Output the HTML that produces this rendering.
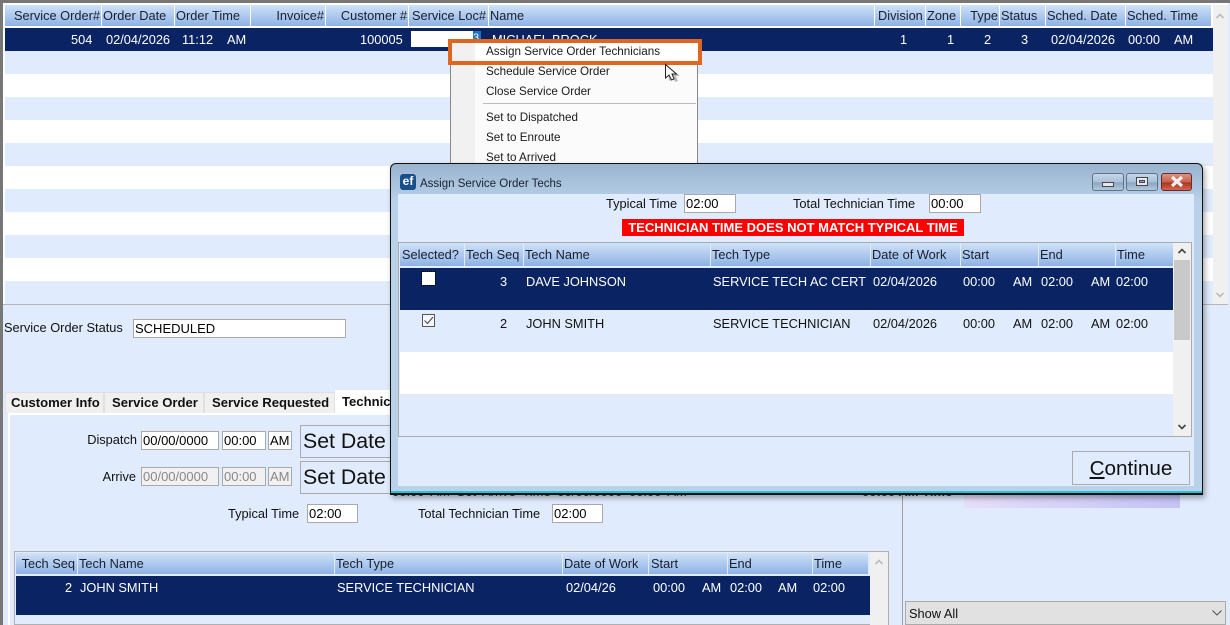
<!DOCTYPE html>
<html><head><meta charset="utf-8">
<style>
html,body{margin:0;padding:0;width:1230px;height:625px;overflow:hidden;background:#e0ecfd}
#p{position:relative;width:1230px;height:625px;overflow:hidden;background:#e0ecfd;font:12.8px "Liberation Sans",sans-serif;color:#111}
#p div{position:absolute;box-sizing:border-box;white-space:nowrap}
.h{background:linear-gradient(#cfe2f8,#8eb2e6);line-height:21px;padding:0 1px;color:#1a1f2e}
.d{line-height:23px;height:23px}
.r{text-align:right}
.w{color:#fff}
.t{line-height:16px;height:16px}
.i{background:#fff;border:1px solid #a9a9a9;line-height:17px;padding-left:1px;color:#000;font-size:13px}
.g{color:#888;background:#f1f1f1}
.s{background:#e0ecfd;border:1px solid #aaa;font-size:21.3px;line-height:31px;padding-left:2px;color:#111}
.m{line-height:16px;font-size:11.66px;left:486px;color:#1a1a1a}
.wb{top:173px;height:18px;border:1px solid #5d7388;border-radius:3px;background:linear-gradient(#c5d6e8 0,#a8c0d8 50%,#8aa6c2 55%,#b3c8dc 100%)}
.tab{top:392px;height:22px;background:#f0f0f0;border:1px solid #e0e0e0;font-weight:bold;font-size:13.1px;line-height:20px}
</style></head><body><div id="p">

<div style="left:0;top:0;width:1230px;height:3px;background:#777"></div>
<div style="left:0;top:0;width:3px;height:625px;background:#777"></div>
<div style="left:3px;top:3px;width:1225px;height:302px;background:#fff;border-bottom:1px solid #b5b5b5"></div>

<div style="left:5px;top:51px;width:1208px;height:23px;background:#e0ecfd"></div>
<div style="left:5px;top:97px;width:1208px;height:23px;background:#e0ecfd"></div>
<div style="left:5px;top:143px;width:1208px;height:23px;background:#e0ecfd"></div>
<div style="left:5px;top:189px;width:1208px;height:23px;background:#e0ecfd"></div>
<div style="left:5px;top:235px;width:1208px;height:23px;background:#e0ecfd"></div>
<div style="left:5px;top:281px;width:1208px;height:23px;background:#e0ecfd"></div>
<div style="left:1213px;top:5px;width:15px;height:299px;background:#f0f0f0"></div>
<svg style="position:absolute;left:1215px;top:12px" width="10" height="8" viewBox="0 0 10 8"><path d="M1.500 6 L5 2.500 L8.500 6" fill="none" stroke="#bbb" stroke-width="1.600"/></svg>
<svg style="position:absolute;left:1215px;top:291px" width="10" height="8" viewBox="0 0 10 8"><path d="M1.500 2 L5 5.500 L8.500 2" fill="none" stroke="#bbb" stroke-width="1.600"/></svg>

<div class="h r" style="left:5px;top:5px;width:96px">Service Order#</div>
<div class="h" style="left:102px;top:5px;width:72px">Order Date</div>
<div class="h" style="left:175px;top:5px;width:75px">Order Time</div>
<div class="h r" style="left:251px;top:5px;width:74px">Invoice#</div>
<div class="h r" style="left:326px;top:5px;width:82px">Customer #</div>
<div class="h" style="left:409px;top:5px;width:79px;padding-left:3px">Service Loc#</div>
<div class="h" style="left:489px;top:5px;width:385px">Name</div>
<div class="h" style="left:875px;top:5px;width:50px;padding-left:3px">Division</div>
<div class="h" style="left:926px;top:5px;width:34px">Zone</div>
<div class="h r" style="left:961px;top:5px;width:38px">Type</div>
<div class="h" style="left:1000px;top:5px;width:45px">Status</div>
<div class="h" style="left:1046px;top:5px;width:79px">Sched. Date</div>
<div class="h" style="left:1126px;top:5px;width:85px">Sched. Time</div>

<div style="left:5px;top:28px;width:1208px;height:23px;background:#0a2463"></div>
<div class="t w" style="left:71px;top:32px">504</div>
<div class="t w" style="left:106px;top:32px">02/04/2026</div>
<div class="t w" style="left:182px;top:32px">11:12</div>
<div class="t w" style="left:227px;top:32px">AM</div>
<div class="t w" style="left:360px;top:32px">100005</div>
<div style="left:411px;top:31px;width:62px;height:16px;background:#fff"></div>
<div style="left:473px;top:31px;width:8px;height:16px;background:#1f6fc4;color:#fff;font-size:11px;line-height:15px">3</div>
<div class="t w" style="left:492px;top:32px">MICHAEL BROCK</div>
<div class="t w" style="left:900px;top:32px">1</div>
<div class="t w" style="left:947px;top:32px">1</div>
<div class="t w" style="left:984px;top:32px">2</div>
<div class="t w" style="left:1021px;top:32px">3</div>
<div class="t w" style="left:1051px;top:32px">02/04/2026</div>
<div class="t w" style="left:1128px;top:32px">00:00</div>
<div class="t w" style="left:1174px;top:32px">AM</div>

<!-- context menu -->
<div style="left:450px;top:40px;width:248px;height:130px;background:#fbfbfb;border-left:1px solid #888;border-right:1px solid #888"></div>
<div style="left:451px;top:40px;width:24px;height:130px;background:#f1f1f1"></div>
<div style="left:483px;top:103px;width:213px;height:1px;background:#bbb"></div>
<div style="left:448px;top:39px;width:254px;height:26px;border:4px solid #e0651f;background:#fff"></div>
<div style="left:452px;top:43px;width:23px;height:18px;background:#f1f1f1"></div>
<div class="m" style="top:44px">Assign Service Order Technicians</div>
<div class="m" style="top:64px">Schedule Service Order</div>
<div class="m" style="top:84px">Close Service Order</div>
<div class="m" style="top:110px">Set to Dispatched</div>
<div class="m" style="top:130px">Set to Enroute</div>
<div class="m" style="top:150px">Set to Arrived</div>
<svg style="position:absolute;left:664px;top:63px" width="18" height="20" viewBox="0 0 18 20"><path d="M3.500 3.500 L5 18 L7 17 L9 14 L11 19 L14 18 L12 13 L16 13 Z" fill="#000" opacity=".25"/><path d="M1.500 1.500 V15 L5 12 L7.500 17 L10 16 L8 11 H12.500 Z" fill="#fff" stroke="#222" stroke-width="1"/></svg>

<!-- lower form -->
<div class="t" style="left:4px;top:320px">Service Order Status</div>
<div class="i" style="left:133px;top:319px;width:213px;height:19px">SCHEDULED</div>

<div class="tab" style="left:5px;width:99px;padding-left:5px">Customer Info</div>
<div class="tab" style="left:104px;width:100px;padding-left:7px">Service Order</div>
<div class="tab" style="left:204px;width:131px;padding-left:7px">Service Requested</div>
<div style="left:335px;top:390px;width:60px;height:24px;background:#fff;font-weight:bold;font-size:13.1px;line-height:24px;padding-left:7px;overflow:hidden">Technicians</div>
<div style="left:9px;top:413px;width:893px;height:2px;background:#fff"></div>
<div style="left:8px;top:413px;width:2px;height:212px;background:#fff"></div>
<div style="left:902px;top:494px;width:1px;height:131px;background:#a0a0a0"></div>

<div class="t r" style="left:60px;top:432px;width:77px">Dispatch</div>
<div class="i" style="left:141px;top:431px;width:78px;height:19px">00/00/0000</div>
<div class="i" style="left:222px;top:431px;width:44px;height:19px">00:00</div>
<div class="i" style="left:268px;top:431px;width:24px;height:19px;padding-left:1px">AM</div>
<div class="s" style="left:300px;top:425px;width:100px;height:33px">Set Date</div>
<div class="t r" style="left:60px;top:469px;width:76px">Arrive</div>
<div class="i g" style="left:141px;top:467px;width:78px;height:19px">00/00/0000</div>
<div class="i g" style="left:222px;top:467px;width:44px;height:19px">00:00</div>
<div class="i g" style="left:268px;top:467px;width:24px;height:19px;padding-left:1px">AM</div>
<div class="s" style="left:300px;top:461px;width:100px;height:33px">Set Date</div>

<div class="t" style="left:228px;top:506px">Typical Time</div>
<div class="i" style="left:307px;top:504px;width:51px;height:19px">02:00</div>
<div class="t" style="left:418px;top:506px">Total Technician Time</div>
<div class="i" style="left:552px;top:504px;width:51px;height:19px">02:00</div>

<div style="left:964px;top:494px;width:216px;height:14px;background:linear-gradient(90deg,#e6dffa,#c3c3f5)"></div>

<!-- lower grid -->
<div style="left:14px;top:551px;width:875px;height:74px;border:1px solid #b0b0b0;background:#e0ecfd"></div>
<div style="left:870px;top:552px;width:18px;height:73px;background:#f0f0f0"></div>
<svg style="position:absolute;left:874px;top:558px" width="10" height="8" viewBox="0 0 10 8"><path d="M1.500 6 L5 2.500 L8.500 6" fill="none" stroke="#bbb" stroke-width="1.600"/></svg>
<div class="h r" style="left:16px;top:553px;width:61px;padding-right:2px">Tech Seq</div>
<div class="h" style="left:78px;top:553px;width:256px">Tech Name</div>
<div class="h" style="left:335px;top:553px;width:227px">Tech Type</div>
<div class="h" style="left:563px;top:553px;width:85px">Date of Work</div>
<div class="h" style="left:649px;top:553px;width:78px;padding-left:2px">Start</div>
<div class="h" style="left:728px;top:553px;width:84px">End</div>
<div class="h" style="left:813px;top:553px;width:55px">Time</div>
<div style="left:16px;top:576px;width:854px;height:39px;background:#0a2463"></div>
<div class="t w" style="left:65px;top:580px">2</div>
<div class="t w" style="left:80px;top:580px">JOHN SMITH</div>
<div class="t w" style="left:337px;top:580px">SERVICE TECHNICIAN</div>
<div class="t w" style="left:566px;top:580px">02/04/26</div>
<div class="t w" style="left:653px;top:580px">00:00</div>
<div class="t w" style="left:702px;top:580px">AM</div>
<div class="t w" style="left:730px;top:580px">02:00</div>
<div class="t w" style="left:778px;top:580px">AM</div>
<div class="t w" style="left:813px;top:580px">02:00</div>

<div style="left:905px;top:601px;width:321px;height:24px;background:#e1e1e1;border:1px solid #aaa;line-height:23px;padding-left:3px">Show All</div>
<svg style="position:absolute;left:1211px;top:609px" width="12" height="8" viewBox="0 0 12 8"><path d="M1.500 1.500 L6 6 L10.500 1.500" fill="none" stroke="#555" stroke-width="1.100"/></svg>

<!-- dialog -->
<div style="left:390px;top:163px;width:813px;height:332px;border:1px solid #111;border-bottom:2px solid #111;border-radius:6px 6px 0 0;background:linear-gradient(#9ab4d0 0,#b9d2ea 12%);box-shadow:2px 3px 6px rgba(0,0,0,.35)"></div>
<div style="left:391px;top:491px;width:811px;height:2px;background:#27c2d8"></div>
<div style="left:398px;top:194px;width:796px;height:292px;background:#e0ecfd"></div>
<div style="left:400px;top:174px;width:16px;height:16px;border-radius:3px;background:#174f8c;color:#fff;font:bold 12px/15px 'Liberation Sans',sans-serif;text-align:center">ef</div>
<div style="left:420px;top:177px;font-size:11.5px;line-height:14px;color:#1a2230">Assign Service Order Techs</div>
<div class="wb" style="left:1092px;width:32px"></div>
<div style="left:1102px;top:182px;width:12px;height:5px;background:#e8e8e8;border:1px solid #445"></div>
<div class="wb" style="left:1126px;width:32px"></div>
<div style="left:1136px;top:177px;width:12px;height:9px;background:#e8e8e8;border:1px solid #445"></div>
<div style="left:1139px;top:180px;width:6px;height:3px;background:#8fa8c2;border:1px solid #445"></div>
<div class="wb" style="left:1161px;width:31px;border-color:#6b2a2a;background:linear-gradient(#dc9282 0,#c9604e 50%,#ad3322 55%,#cc6a52 100%)"></div>
<svg style="position:absolute;left:1169px;top:175px" width="16" height="13" viewBox="0 0 16 13"><path d="M3 2 L13 11 M13 2 L3 11" stroke="#eee" stroke-width="3.200" fill="none"/></svg>

<div class="t" style="left:606px;top:196px">Typical Time</div>
<div class="i" style="left:684px;top:194px;width:52px;height:19px">02:00</div>
<div class="t" style="left:793px;top:196px">Total Technician Time</div>
<div class="i" style="left:929px;top:194px;width:52px;height:19px">00:00</div>
<div style="left:622px;top:219px;width:342px;height:17px;background:#fe0000;color:#fff;font-weight:bold;font-size:13px;line-height:17px;text-align:center">TECHNICIAN TIME DOES NOT MATCH TYPICAL TIME</div>

<div style="left:398px;top:242px;width:794px;height:195px;border:1px solid #aaa;background:#e0ecfd"></div>
<div class="h d" style="left:400px;top:243px;width:64px;padding-left:2px">Selected?</div>
<div class="h d" style="left:465px;top:243px;width:58px">Tech Seq</div>
<div class="h d" style="left:524px;top:243px;width:186px">Tech Name</div>
<div class="h d" style="left:711px;top:243px;width:159px">Tech Type</div>
<div class="h d" style="left:871px;top:243px;width:89px">Date of Work</div>
<div class="h d" style="left:961px;top:243px;width:77px">Start</div>
<div class="h d" style="left:1039px;top:243px;width:76px">End</div>
<div class="h d" style="left:1116px;top:243px;width:57px">Time</div>
<div style="left:400px;top:268px;width:773px;height:42px;background:#0a2463"></div>
<div style="left:400px;top:352px;width:773px;height:42px;background:#fff"></div>
<div style="left:1173px;top:243px;width:18px;height:193px;background:#f0f0f0"></div>
<div style="left:1174px;top:260px;width:16px;height:80px;background:#c9c9c9"></div>
<svg style="position:absolute;left:1177px;top:247px" width="10" height="8" viewBox="0 0 10 8"><path d="M1.500 6 L5 2.500 L8.500 6" fill="none" stroke="#444" stroke-width="1.600"/></svg>
<svg style="position:absolute;left:1177px;top:423px" width="10" height="8" viewBox="0 0 10 8"><path d="M1.500 2 L5 5.500 L8.500 2" fill="none" stroke="#444" stroke-width="1.600"/></svg>

<div style="left:421px;top:271px;width:15px;height:15px;border:1px dotted #000;background:#0a2463"></div>
<div style="left:422px;top:272px;width:13px;height:13px;background:#fff"></div>
<div class="t w" style="left:500px;top:274px">3</div>
<div class="t w" style="left:526px;top:274px">DAVE JOHNSON</div>
<div class="t w" style="left:713px;top:274px">SERVICE TECH AC CERT</div>
<div class="t w" style="left:873px;top:274px">02/04/2026</div>
<div class="t w" style="left:963px;top:274px">00:00</div>
<div class="t w" style="left:1013px;top:274px">AM</div>
<div class="t w" style="left:1041px;top:274px">02:00</div>
<div class="t w" style="left:1091px;top:274px">AM</div>
<div class="t w" style="left:1116px;top:274px">02:00</div>

<div style="left:422px;top:314px;width:13px;height:13px;background:#f4f8fe;border:1px solid #555"></div>
<svg style="position:absolute;left:423px;top:315px" width="11" height="11" viewBox="0 0 11 11"><path d="M1.500 5.500 L4.500 8.500 L10 2" fill="none" stroke="#555" stroke-width="1.200"/></svg>
<div class="t" style="left:500px;top:316px">2</div>
<div class="t" style="left:526px;top:316px">JOHN SMITH</div>
<div class="t" style="left:713px;top:316px">SERVICE TECHNICIAN</div>
<div class="t" style="left:873px;top:316px">02/04/2026</div>
<div class="t" style="left:963px;top:316px">00:00</div>
<div class="t" style="left:1013px;top:316px">AM</div>
<div class="t" style="left:1041px;top:316px">02:00</div>
<div class="t" style="left:1091px;top:316px">AM</div>
<div class="t" style="left:1116px;top:316px">02:00</div>

<div style="left:1072px;top:451px;width:118px;height:34px;border:1px solid #aaa;background:#e0ecfd;font-size:20.7px;line-height:33px;text-align:center;color:#111"><u>C</u>ontinue</div>

<!-- text peeking out beneath the dialog -->
<div style="left:392px;top:495px;width:594px;height:2px;overflow:hidden">
<div style="left:0;top:-10px;font-size:13px;line-height:14px;word-spacing:3px;color:#222">00:00 AM Set Arrive Time 00/00/0000 00:00 AM</div>
<div style="left:470px;top:-10px;font-size:13px;line-height:14px;font-weight:bold;color:#222">00:00 AM Time</div>
</div>

</div></body></html>
